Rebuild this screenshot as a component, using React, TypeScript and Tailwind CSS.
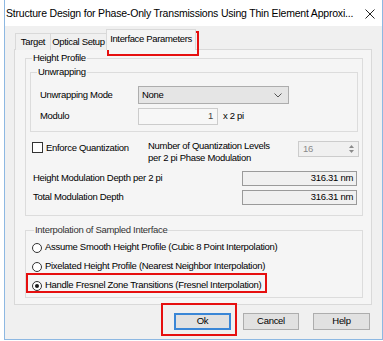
import React from "react";

const Radio = ({ checked, label }: { checked?: boolean; label: string }) => (
  <div className="flex items-center h-[19px] pl-[6px]">
    <span className="w-[10px] h-[10px] rounded-full border border-[#333333] bg-white flex items-center justify-center">
      {checked && <span className="w-[4px] h-[4px] rounded-full bg-[#1a1a1a]" />}
    </span>
    <span className="ml-[3px]">{label}</span>
  </div>
);

export default function App() {
  return (
    <div className="relative w-[383px] h-[341px] bg-white overflow-hidden font-['Liberation_Sans',Arial,sans-serif] text-[9.5px] tracking-[-0.3px] text-[#000000] whitespace-nowrap">
      <div className="ml-[4px] w-[379px] h-[340px] border-l border-r border-b border-[#8db8e2] flex flex-col">
        {/* title bar */}
        <div className="h-[26px] shrink-0 bg-white flex items-center justify-between pl-[1px] pr-[7px]">
          <span className="text-[10.5px] tracking-[-0.2px] text-[#000000] pt-[1px]">
            Structure Design for Phase-Only Transmissions Using Thin Element Approxi...
          </span>
          <svg width="10" height="10" viewBox="0 0 10 10" className="mt-[2px] shrink-0">
            <path d="M0.5 0.5 L9.5 9.5 M9.5 0.5 L0.5 9.5" stroke="#222" strokeWidth="1" fill="none" />
          </svg>
        </div>
        {/* body */}
        <div className="flex-1 bg-[#f0f0f0] pl-[9px] pr-[10px] pt-[4px] flex flex-col">
          {/* tabs */}
          <div className="flex items-end h-[20px] -mb-px relative z-10 tracking-[-0.35px]">
            <div className="ml-[1px] w-[35px] h-[17px] border-t border-l border-[#d9d9d9] bg-[#f0f0f0] flex items-center justify-center">Target</div>
            <div className="w-[57px] h-[17px] border-t border-l border-r border-[#d9d9d9] bg-[#f0f0f0] flex items-center justify-center">Optical Setup</div>
            <div className="w-[90px] h-[21px] border-t border-l border-r border-[#d9d9d9] bg-[#f5f5f5] flex items-center justify-center pb-[2px] -ml-px">Interface Parameters</div>
          </div>
          {/* panel */}
          <div className="w-[358px] h-[256px] border border-[#d9d9d9] bg-[#f5f5f5] pl-[10px] pr-[8px] pt-[3px] flex flex-col">
            {/* Height Profile */}
            <fieldset className="border border-[#dcdcdc] h-[163px] flex flex-col">
              <legend className="ml-[6px] px-[1px] leading-[10px] h-[10px]">Height Profile</legend>
              <fieldset className="mx-[4px] mt-[4px] border border-[#dcdcdc] h-[65px]">
                <legend className="ml-[6px] px-[1px] leading-[10px] h-[10px]">Unwrapping</legend>
                <div className="flex items-center mt-[9px] h-[18px] pl-[9px]">
                  <span className="w-[98px]">Unwrapping Mode</span>
                  <div className="w-[151px] h-[18px] bg-[#e5e5e5] border border-[#adadad] flex items-center justify-between pl-[3px] pr-[6px]">
                    <span>None</span>
                    <svg width="8" height="5" viewBox="0 0 8 5">
                      <path d="M0.5 0.5 L4 4 L7.5 0.5" stroke="#555" strokeWidth="1" fill="none" />
                    </svg>
                  </div>
                </div>
                <div className="flex items-center mt-[4px] h-[17px] pl-[9px]">
                  <span className="w-[98px]">Modulo</span>
                  <div className="w-[80px] h-[17px] bg-[#f7f7f7] border border-[#cccccc] flex items-center justify-end pr-[4px] text-[#444444]">1</div>
                  <span className="ml-[5px]">x 2 pi</span>
                </div>
              </fieldset>
              {/* quantization */}
              <div className="flex mt-[9px] pl-[6px] h-[18px]">
                <span className="w-[11px] h-[11px] mt-[1px] border border-[#333333] bg-white" />
                <span className="ml-[3px] w-[102px] mt-[1px] leading-[11px]">Enforce Quantization</span>
                <div className="leading-[12px] w-[150px] -mt-[1px]">
                  <div>Number of Quantization Levels</div>
                  <div>per 2 pi Phase Modulation</div>
                </div>
                <div className="w-[61px] h-[16px] border border-[#cccccc] bg-[#f0f0f0] flex items-center justify-between pl-[4px] text-[#8a8a8a]">
                  <span>16</span>
                  <div className="w-[11px] h-[14px] flex flex-col items-center justify-center gap-[2px] mr-[1px]">
                    <svg width="5" height="3" viewBox="0 0 5 3"><path d="M0 3 L2.5 0 L5 3 Z" fill="#8a8a8a" /></svg>
                    <svg width="5" height="3" viewBox="0 0 5 3"><path d="M0 0 L2.5 3 L5 0 Z" fill="#8a8a8a" /></svg>
                  </div>
                </div>
              </div>
              <div className="flex items-center justify-between mt-[12px] pl-[7px] pr-[5px] h-[15px]">
                <span>Height Modulation Depth per 2 pi</span>
                <div className="w-[115px] h-[15px] border border-[#9a9a9a] bg-[#f0f0f0] flex items-center justify-end pr-[3px]">316.31 nm</div>
              </div>
              <div className="flex items-center justify-between mt-[4px] pl-[7px] pr-[5px] h-[15px]">
                <span>Total Modulation Depth</span>
                <div className="w-[115px] h-[15px] border border-[#9a9a9a] bg-[#f0f0f0] flex items-center justify-end pr-[3px]">316.31 nm</div>
              </div>
            </fieldset>
            {/* Interpolation */}
            <fieldset className="mt-[9px] border border-[#dcdcdc] h-[73px] flex flex-col">
              <legend className="ml-[8px] px-[1px] leading-[10px] h-[10px] text-[#333333]">Interpolation of Sampled Interface</legend>
              <div className="mt-[3px] flex flex-col">
                <Radio label="Assume Smooth Height Profile (Cubic 8 Point Interpolation)" />
                <Radio label="Pixelated Height Profile (Nearest Neighbor Interpolation)" />
                <Radio checked label="Handle Fresnel Zone Transitions (Fresnel Interpolation)" />
              </div>
            </fieldset>
          </div>
          {/* buttons */}
          <div className="flex justify-end mt-[8px] mr-[2px]">
            <button className="w-[57px] h-[17px] bg-[#e1e1e1] border-2 border-[#3a86d6] flex items-center justify-center text-[#000]">Ok</button>
            <button className="ml-[12px] w-[56px] h-[17px] bg-[#e1e1e1] border border-[#adadad] flex items-center justify-center text-[#000]">Cancel</button>
            <button className="ml-[14px] w-[57px] h-[17px] bg-[#e1e1e1] border border-[#adadad] flex items-center justify-center text-[#000]">Help</button>
          </div>
        </div>
      </div>
      {/* red annotation boxes */}
      <div className="absolute left-[107px] top-[31px] w-[92px] h-[25px] border-[2.5px] border-[#e60f0f]" />
      <div className="absolute left-[26px] top-[273px] w-[241px] h-[20px] border-[2.5px] border-[#e60f0f]" />
      <div className="absolute left-[161px] top-[303px] w-[76px] h-[33px] border-[2.5px] border-[#e60f0f]" />
    </div>
  );
}
